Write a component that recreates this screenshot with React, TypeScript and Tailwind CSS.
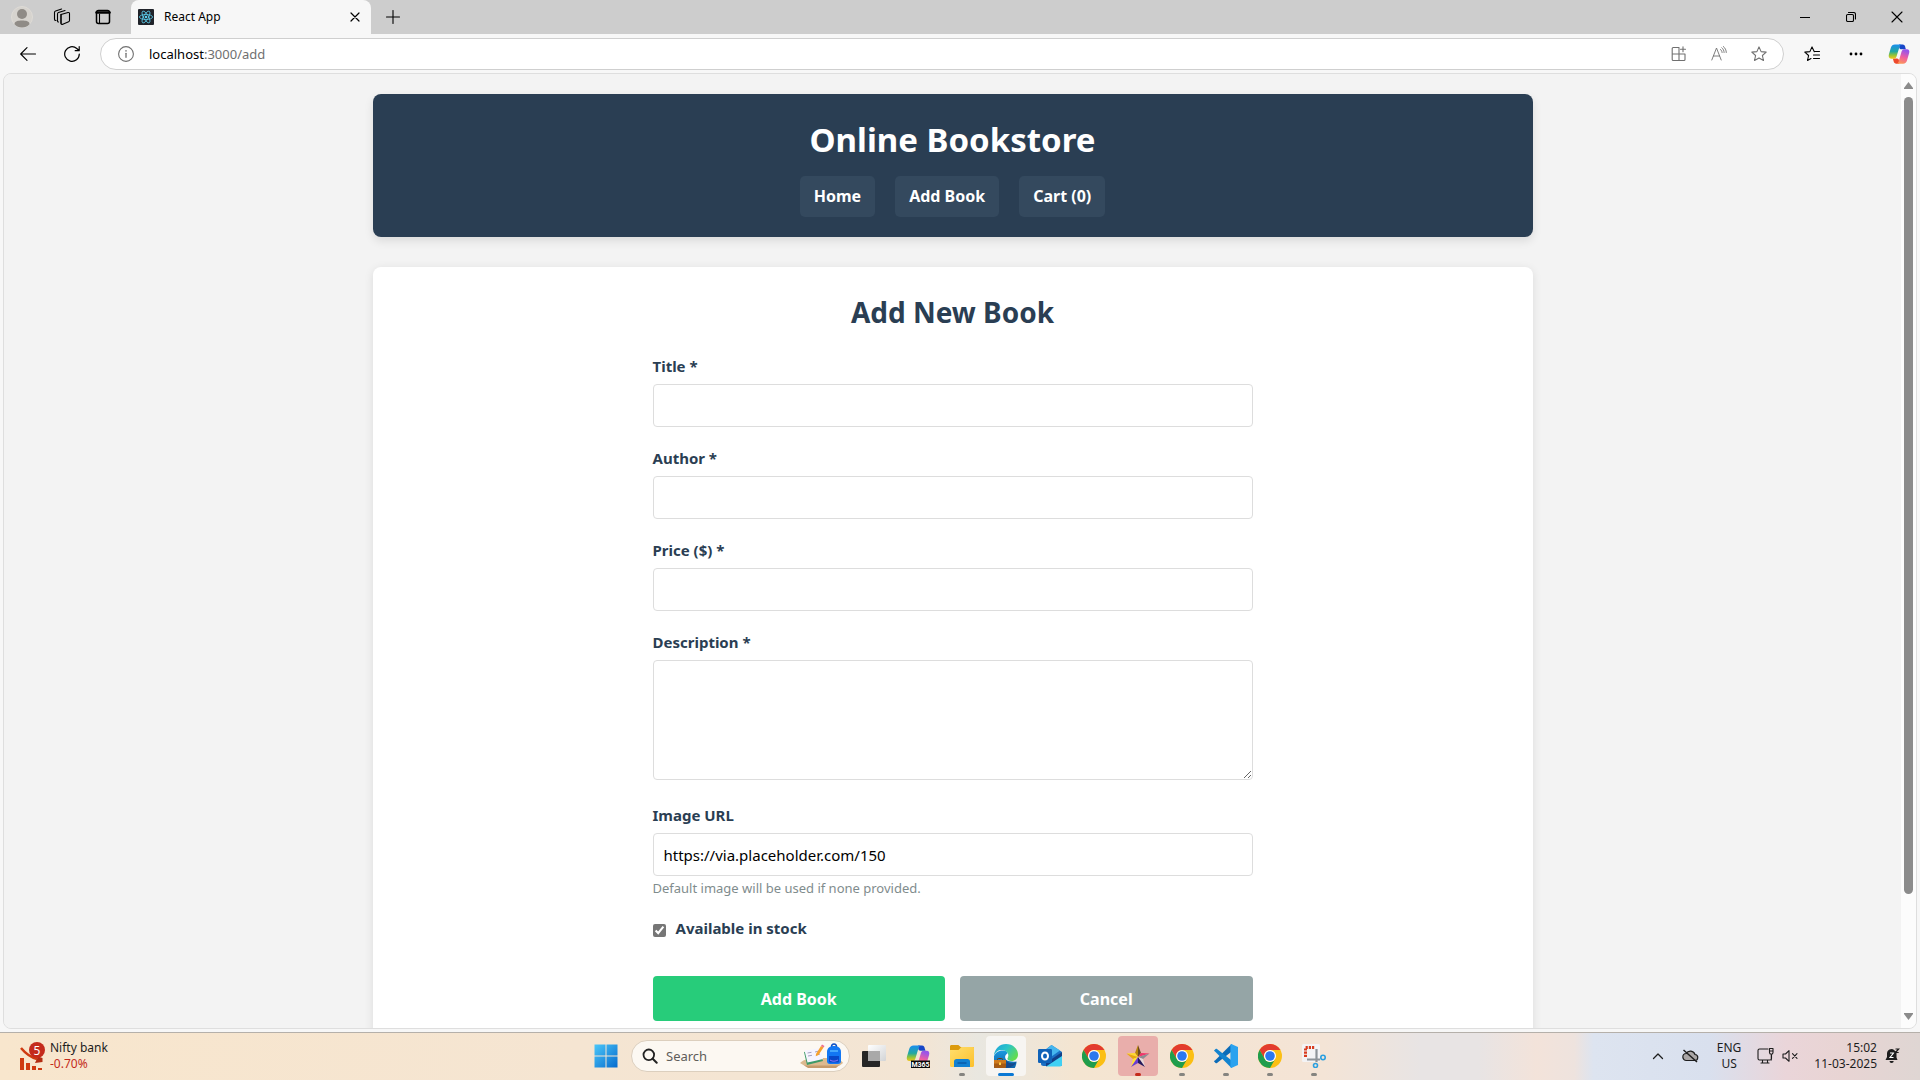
import React from "react";

type IconProps = { children: React.ReactNode; size?: number; box?: string; className?: string };

function Line({ children, size = 16, box = "0 0 16 16", className = "" }: IconProps) {
  return (
    <svg width={size} height={size} viewBox={box} fill="none" stroke="currentColor" strokeWidth="1.1" strokeLinecap="round" strokeLinejoin="round" className={"shrink-0 " + className} aria-hidden="true">
      {children}
    </svg>
  );
}

const STAR = "M8 .9l2.1 4.7 5.1.5-3.8 3.4 1.1 5L8 11.9l-4.5 2.6 1.1-5L.8 6.1l5.1-.5z";

function ReactLogo() {
  return (
    <svg width="16" height="16" viewBox="0 0 16 16" aria-hidden="true">
      <rect width="16" height="16" rx="1" fill="#20232a" />
      <g fill="none" stroke="#5ccfee" strokeWidth=".8">
        <ellipse cx="8" cy="8" rx="6.6" ry="2.5" />
        <ellipse cx="8" cy="8" rx="6.6" ry="2.5" transform="rotate(60 8 8)" />
        <ellipse cx="8" cy="8" rx="6.6" ry="2.5" transform="rotate(120 8 8)" />
      </g>
      <circle cx="8" cy="8" r="1.3" fill="#5ccfee" />
    </svg>
  );
}

function CopilotLogo({ id, size, badge = false }: { id: string; size: number; badge?: boolean }) {
  return (
    <svg width={size} height={size} viewBox="0 0 24 24" aria-hidden="true">
      <defs>
        <linearGradient id={id + "a"} x1="0" y1="0" x2="0" y2="1">
          <stop offset="0" stopColor="#1a8df0" />
          <stop offset=".5" stopColor="#22a8a0" />
          <stop offset=".75" stopColor="#8fc43a" />
          <stop offset="1" stopColor="#f5c51c" />
        </linearGradient>
        <linearGradient id={id + "b"} x1="0.3" y1="0" x2="0" y2="1">
          <stop offset="0" stopColor="#9a55e8" />
          <stop offset=".45" stopColor="#f05fa0" />
          <stop offset="1" stopColor="#ffa04a" />
        </linearGradient>
      </defs>
      <path d="M12 1.5h4.2c1.2 0 1.9.9 2.3 2l1 3.2h-5.2c-1 0-1.7-.5-2-1.6z" fill="#1746c8" />
      <path d="M12.2 22.5H8.6c-1.3 0-2-.9-2.4-2.2L5.3 17h4.6c1.2 0 1.8.8 2 1.7z" fill="#ee4a2d" />
      <path d="M7.6 1.5h7.3c-1.3.3-2 1.4-2.5 3l-3 10c-.5 1.6-1.3 2.6-3 2.6H3.5C1 17.1.3 15 1 12.4l2.2-7.4c.7-2.2 2-3.5 4.4-3.5z" fill={"url(#" + id + "a)"} />
      <path d="M16.400 22.500H9.600c1.200-.3 1.700-1.300 2.100-2.700l3.100-10.400c.5-1.600 1.200-2.700 2.900-2.700h3c2.300 0 3.100 2 2.300 4.600l-2.200 7.500c-.7 2.300-2 3.700-4.400 3.700z" fill={"url(#" + id + "b)"} />
      {badge && (
        <>
          <rect x="5" y="16.500" width="19" height="7.500" fill="#0a0a0a" />
          <text x="14.500" y="23" textAnchor="middle" fontSize="7" fontWeight="700" fill="#fff" fontFamily="Roboto, sans-serif">M365</text>
        </>
      )}
    </svg>
  );
}

function Chrome() {
  return (
    <svg width="24" height="24" viewBox="0 0 24 24" aria-hidden="true">
      <circle cx="12" cy="12" r="12" fill="#fbbf14" />
      <path d="M1.600 6A12 12 0 0 1 22.400 6H12a6 6 0 0 0-5.200 9z" fill="#e33b2e" />
      <path d="M1.600 6A12 12 0 0 0 12 24l5.200-9a6 6 0 0 1-10.400 0z" fill="#1f9d4d" />
      <circle cx="12" cy="12" r="6" fill="#fff" />
      <circle cx="12" cy="12" r="4.800" fill="#2b78ee" />
    </svg>
  );
}

function WindowsLogo() {
  return (
    <svg width="24" height="24" viewBox="0 0 24 24" aria-hidden="true">
      <defs>
        <linearGradient id="win" x1="0" y1="0" x2="24" y2="24" gradientUnits="userSpaceOnUse">
          <stop offset="0" stopColor="#4cc9fa" />
          <stop offset="1" stopColor="#0568cc" />
        </linearGradient>
      </defs>
      <path d="M.5.500h11v11H.5zM12.500.500h11v11h-11zM.5 12.500h11v11H.5zM12.500 12.500h11v11h-11z" fill="url(#win)" />
    </svg>
  );
}

function TaskView() {
  return (
    <svg width="24" height="24" viewBox="0 0 24 24" aria-hidden="true">
      <defs>
        <linearGradient id="tv" x1="0" y1="0" x2="1" y2="1">
          <stop offset="0" stopColor="#ffffff" />
          <stop offset="1" stopColor="#d2d4d6" />
        </linearGradient>
      </defs>
      <rect x="0" y="7" width="18" height="16" rx="1" fill="#262626" />
      <rect x="6" y="1" width="18" height="16" rx="1" fill="url(#tv)" />
      <rect x="6" y="7" width="12" height="10" fill="#a9a9a9" />
    </svg>
  );
}

function Folder() {
  return (
    <svg width="24" height="24" viewBox="0 0 24 24" aria-hidden="true">
      <defs>
        <linearGradient id="fo" x1="0" y1="0" x2="1" y2="1">
          <stop offset="0" stopColor="#ffdf6e" />
          <stop offset="1" stopColor="#fcc02c" />
        </linearGradient>
      </defs>
      <path d="M0 2.500C0 1.700.6 1 1.400 1h7l2.200 2H23c.6 0 1 .5 1 1v6H0z" fill="#dc9a0c" />
      <path d="M0 6h8.500l3-3H23c.6 0 1 .5 1 1v17.500c0 .8-.6 1.500-1.400 1.500H1.400C.6 23 0 22.300 0 21.500z" fill="url(#fo)" />
      <path d="M4 23v-5.500c0-1.400 1-2.500 2.500-2.500h11c1.500 0 2.500 1.100 2.500 2.500V23z" fill="#1180d2" />
      <path d="M7.500 19h9" stroke="#0a5ba8" strokeWidth="1.500" />
    </svg>
  );
}

function Edge() {
  return (
    <svg width="24" height="24" viewBox="0 0 24 24" aria-hidden="true">
      <defs>
        <linearGradient id="eg" x1="0" y1="0" x2="1" y2=".6">
          <stop offset="0" stopColor="#1c9fdc" />
          <stop offset=".5" stopColor="#2bc4c8" />
          <stop offset="1" stopColor="#63dc50" />
        </linearGradient>
        <linearGradient id="eb" x1="0" y1="0" x2="0" y2="1">
          <stop offset="0" stopColor="#1a9ae0" />
          <stop offset="1" stopColor="#0b4f97" />
        </linearGradient>
      </defs>
      <path d="M22.500 17.500A12 12 0 1 1 0 12C2 7 7 6 10 6.500c4 .5 4 4 3 6-1.500 3 1 6 9.500 5z" fill="url(#eb)" />
      <path d="M0 11.500C.4 4.800 5.700 0 12 0c7 0 12 5 12 10.500 0 4-3 6.500-6.500 6.500-2.500 0-4.500-1-4.300-2.200.2-.8 1.100-1.300 1.100-3.300 0-3.500-3.500-5.500-7-5.500C4 6 1.500 8 0 11.500z" fill="url(#eg)" />
      <path d="M12.500 12c-1.500 3 .5 7 5 7.300 2 .1 3.800-.5 5-1.500-2 4-6 6.200-10.500 6.200z" fill="#174a8c" />
      <path d="M13.800 9.500c1 2-.3 3.800-.6 5.300 0 1.500 2 2.300 4 2.300-4 .6-6.500-2-6-4.800.3-1.500 1.500-2.500 2.600-2.800z" fill="#fff" />
      <rect x="3.500" y="14.500" width="5" height="3" rx="1" fill="none" stroke="#6a3a10" />
      <rect x="0" y="16" width="12" height="8" rx="1" fill="#a65a14" />
      <path d="M0 16h12v3.500H0z" fill="#cf7a1c" />
      <rect x="5" y="18.500" width="2" height="2.500" fill="#ffd24a" />
    </svg>
  );
}

function Outlook() {
  return (
    <svg width="24" height="24" viewBox="0 0 24 24" aria-hidden="true">
      <path d="M3 9L13.500 1 24 8v12.500c0 1-.8 1.500-1.500 1.500h-17C4 22 3 21 3 20z" fill="#1a6fc4" />
      <path d="M6 7l7.500-6L22 6.500l-8.500 6z" fill="#45b6ee" />
      <path d="M24 8v12.500c0 1-.8 2-2 2H8z" fill="#3fd0f4" />
      <path d="M24 8L8 19v3.500L24 12z" fill="#123f87" />
      <rect x="0" y="5" width="14" height="14" rx="1.200" fill="#0f62b8" />
      <ellipse cx="7" cy="12" rx="3" ry="3.500" fill="none" stroke="#fff" strokeWidth="2" />
    </svg>
  );
}

function StarApp() {
  return (
    <svg width="24" height="24" viewBox="0 0 24 24" aria-hidden="true">
      <path d="M12 1l-3 8 3 4z" fill="#b9860c" />
      <path d="M12 1l3 8-3 4z" fill="#6a4a20" />
      <path d="M12 13L.5 9.500 9 9z" fill="#ffd92e" />
      <path d="M12 13L.5 9.500 7 15z" fill="#e7a80f" />
      <path d="M12 13l11.500-3.500L15 9z" fill="#f0356a" />
      <path d="M12 13l11.500-3.500L17 15z" fill="#8c8c92" />
      <path d="M12 13l-5 2-2 8z" fill="#ffe234" />
      <path d="M12 13l-7 10 7-4z" fill="#6a3fd0" />
      <path d="M12 13l5 2 2 8z" fill="#e6d8d8" />
      <path d="M12 13l7 10-7-4z" fill="#241a5c" />
    </svg>
  );
}

function VsCode() {
  return (
    <svg width="24" height="24" viewBox="0 0 24 24" aria-hidden="true">
      <path d="M1 16.600L17.500 0 19 6.500 3 19c-.5.400-1 .3-1.400 0L.3 17.700c-.4-.4-.3-.8.700-1.100z" fill="#0b6cb8" />
      <path d="M1 7.400L17.500 24l1.500-6.500L3 5c-.5-.4-1-.3-1.400 0L.3 6.300c-.4.400-.3.800.700 1.100z" fill="#1283cf" />
      <path d="M17.300 0L24 3v18l-6.700 3c-.6-.3-.9-.7-.9-1.200V1.200c0-.5.300-.9.900-1.200z" fill="#2ba2ef" />
    </svg>
  );
}

function SnippingTool() {
  return (
    <svg width="24" height="24" viewBox="0 0 24 24" aria-hidden="true">
      <rect x="0" y="0" width="18" height="18" rx="1.500" fill="#f3f3f5" />
      <path d="M3.500 13V3.500H13" fill="none" stroke="#d83b1e" strokeWidth="3" strokeDasharray="2.200 1" />
      <path d="M14.500 5v13M5 15.500h13" stroke="#8d9399" strokeWidth="2.200" fill="none" />
      <circle cx="21" cy="13.500" r="2.200" fill="none" stroke="#2a9fe0" strokeWidth="1.600" />
      <circle cx="13.500" cy="21.500" r="2" fill="none" stroke="#2a9fe0" strokeWidth="1.600" />
    </svg>
  );
}

function SearchArt() {
  return (
    <svg width="46" height="26" viewBox="0 0 46 26" aria-hidden="true">
      <path d="M1 20c4-4 9-5 22-5s20 2 21 5l-4 3H6z" fill="#dcb98e" />
      <path d="M5 22.500h35l-3 2.500H9z" fill="#c59a6a" />
      <path d="M5 9l15-3 4 12-16 4z" fill="#3e9a68" />
      <path d="M5.500 7.500l8-1 2 11.500-7 1.500zM13.500 6.500l7.500-1.500 3 11-8.500 2z" fill="#f6f4ff" />
      <path d="M8.500 10l4-.7M9 13l4-.7M16 9l4-1M17 12l4-1" stroke="#8e8bb0" strokeWidth=".8" />
      <path d="M17 11l5-8 2.500 1.500-5 7.500-2.800 1.200z" fill="#f7a12c" />
      <path d="M22 3l1-1.500 2.500 1.500-1 1.500z" fill="#ef6b8c" />
      <path d="M32.500 4c0-4 5-4 5 0" fill="none" stroke="#0d4fc4" strokeWidth="1.500" />
      <path d="M28 9c0-4 3-6 7-6s7 2 7 6v9c0 2-1 3-3 3h-8c-2 0-3-1-3-3z" fill="#1277f3" />
      <path d="M30 13h10v5c0 1-.5 1.500-1.500 1.500h-7c-1 0-1.500-.5-1.500-1.500z" fill="#0848c8" />
      <path d="M31 8h8" stroke="#54b7ff" strokeWidth="1.500" />
      <path d="M31 17c3 2 6 1 8 0" stroke="#9b7bff" fill="none" />
    </svg>
  );
}

type TaskProps = { label: string; children: React.ReactNode; tile?: string; mark?: string };

function Task({ label, children, tile = "", mark = "" }: TaskProps) {
  return (
    <button aria-label={label} className="relative flex h-10 w-11 items-center justify-center">
      <span className={"flex h-10 w-10 items-center justify-center rounded " + tile}>{children}</span>
      {mark && <span className={"absolute bottom-0 left-1/2 h-[3px] -translate-x-1/2 rounded-full " + mark} />}
    </button>
  );
}

const OPEN_MARK = "w-1.5 bg-[#858480]";

function TitleBar() {
  return (
    <div className="flex h-[34px] shrink-0 bg-[#cdcdcd] text-black">
      <div className="flex items-center gap-5 pr-5 pl-[11px]">
        <button aria-label="Profile">
          <svg width="22" height="22" viewBox="0 0 22 22" aria-hidden="true">
            <circle cx="11" cy="11" r="10.500" fill="#d6d3ce" stroke="#dedbd6" />
            <circle cx="11" cy="8" r="5" fill="#8f8b86" />
            <path d="M3.500 18.300C3.500 15 7 14.500 11 14.500s7.500.5 7.500 3.800A10.500 10.500 0 0 1 11 21.500a10.500 10.500 0 0 1-7.500-3.200z" fill="#8f8b86" />
          </svg>
        </button>
        <button aria-label="Workspaces">
          <Line size={18} box="0 0 18 18">
            <path d="M8 6.500l7-2c.8-.2 1.500.2 1.500 1v7c0 .6-.3 1-.9 1.200l-5.800 2.500c-1 .4-1.800 0-1.800-1zM5.500 14C5 14 4.500 13.500 4.500 13V6c0-.8.4-1.300 1-1.500l6.500-2M3 12.500c-.8 0-1.500-.5-1.500-1.300V4.500C1.500 3.700 2 3.200 2.600 3l6-2" />
            <path d="M8 6.500v8.700" />
          </Line>
        </button>
        <button aria-label="Tab actions" className="ml-1">
          <Line>
            <rect x="1.500" y="1.500" width="13" height="13" rx="2" strokeWidth="1.500" />
            <path d="M1.500 3.500h13" strokeWidth="2.500" />
            <path d="M4.500 5v9" />
          </Line>
        </button>
      </div>
      <div className="flex w-60 items-center rounded-t-lg bg-[#f7f7f7] pr-2 pl-[7px]">
        <ReactLogo />
        <span className="ml-2.5 flex-1 text-[12px] leading-4">React App</span>
        <button aria-label="Close tab" className="flex h-4 w-4 items-center justify-center">
          <Line size={10} box="0 0 10 10"><path d="M1 1l8 8M9 1L1 9" strokeWidth="1.200" /></Line>
        </button>
      </div>
      <button aria-label="New tab" className="flex w-11 items-center justify-center">
        <Line size={14} box="0 0 14 14"><path d="M7 .5v13M.5 7h13" /></Line>
      </button>
      <div className="ml-auto flex">
        <button aria-label="Minimize" className="flex w-[46px] items-center justify-center">
          <Line size={10} box="0 0 10 10"><path d="M0 5.500h10" strokeWidth="1" /></Line>
        </button>
        <button aria-label="Restore" className="flex w-[46px] items-center justify-center">
          <Line size={10} box="0 0 10 10">
            <rect x=".5" y="2.500" width="7" height="7" rx="1.200" />
            <path d="M2.500.5H7.500c1.200 0 2 .8 2 2V7" />
          </Line>
        </button>
        <button aria-label="Close" className="flex w-[46px] items-center justify-center">
          <Line size={12} box="0 0 12 12"><path d="M1 1l10 10M11 1L1 11" /></Line>
        </button>
      </div>
    </div>
  );
}

function Toolbar() {
  return (
    <div className="flex h-[39px] shrink-0 items-center bg-[#f7f7f7] text-black">
      <button aria-label="Back" className="ml-5">
        <Line><path d="M15.500 8H.7M7 1.700L.7 8 7 14.300" /></Line>
      </button>
      <button aria-label="Refresh" className="ml-7">
        <Line><path d="M15.300 8A7.300 7.300 0 1 1 12.800 2.500L15 4.500M15.200.7v4h-4" strokeWidth="1.200" /></Line>
      </button>
      <div className="ml-5 flex h-8 flex-1 items-center rounded-full border border-[#cfcfcf] bg-white px-4 text-[#707070]">
        <button aria-label="Site information" className="ml-px">
          <Line><circle cx="8" cy="8" r="7.400" /><path d="M8 7.300v4" strokeWidth="1.300" /><path d="M8 4.800v.1" strokeWidth="1.500" /></Line>
        </button>
        <div role="textbox" aria-label="Address" className="ml-[15px] flex-1 text-[13px] leading-5">
          <span className="text-black">localhost</span>:3000/add
        </div>
        <div className="flex items-center gap-6">
          <button aria-label="Apps"><Line><path d="M8 8V1.500H2.200c-.6 0-1 .4-1 1v11c0 .6.400 1 1 1H13c.6 0 1-.4 1-1V8H1.200M8 8v6.500M12 .800v5M9.500 3.300h5" /></Line></button>
          <button aria-label="Read aloud"><Line><path d="M.8 14L5.500 2l4.700 12M2.400 10h6.200M9.500 3.500c1 .8 1.500 1.700 1.600 3M10.800 1.800c1.500 1.200 2.200 2.700 2.300 4.700M12.300.500c1.900 1.500 2.900 3.500 3 6" strokeWidth=".9" /></Line></button>
          <button aria-label="Add to favorites"><Line><path d={STAR} /></Line></button>
        </div>
      </div>
      <div className="ml-5 flex items-center gap-7 pr-2.5">
        <button aria-label="Favorites"><Line><path d="M10.300 5.700L8 .9 5.900 5.600.8 6.100l3.800 3.400-1.100 5L7 12.500M10.500 5.500h5M9.500 9h6M9.500 12.500h6" /></Line></button>
        <button aria-label="Settings and more"><Line><g fill="currentColor" stroke="none"><circle cx="3" cy="8" r="1.400" /><circle cx="8" cy="8" r="1.400" /><circle cx="13" cy="8" r="1.400" /></g></Line></button>
        <button aria-label="Copilot" className="-ml-1"><CopilotLogo id="tool" size={22} /></button>
      </div>
    </div>
  );
}

const inputClass = "mt-[7px] h-[43px] w-full rounded border border-[#dddddd] bg-white px-2.5 text-[15px] text-black";
const labelClass = "block text-[15px] leading-[22px] font-bold text-[#2a3e53]";

function Field({ id, label, value = "" }: { id: string; label: string; value?: string }) {
  return (
    <div>
      <label htmlFor={id} className={labelClass}>{label}</label>
      <input id={id} type="text" defaultValue={value} className={inputClass} />
    </div>
  );
}

function NavLink({ children }: { children: React.ReactNode }) {
  return (
    <a href="#" className="rounded-[5px] bg-[#34495e] px-3.5 py-2 text-[16px] leading-[25px] font-bold text-white">
      {children}
    </a>
  );
}

function Page() {
  return (
    <main className="min-w-0 flex-1 overflow-hidden bg-[#f3f3f3]">
      <div className="mx-auto max-w-[1200px] p-5">
        <header className="rounded-lg bg-[#2a3e53] p-5 text-center shadow-[0_4px_10px_rgba(0,0,0,0.1)]">
          <h1 className="text-[33px] leading-[52px] font-bold text-white">Online Bookstore</h1>
          <nav className="mt-2.5 flex justify-center gap-5">
            <NavLink>Home</NavLink>
            <NavLink>Add Book</NavLink>
            <NavLink>Cart (0)</NavLink>
          </nav>
        </header>
        <section className="mt-[30px] rounded-lg bg-white px-[30px] pt-7 pb-[30px] shadow-[0_2px_10px_rgba(0,0,0,0.1)]">
          <h2 className="text-center text-[28px] leading-[34px] font-bold text-[#2a3e53]">Add New Book</h2>
          <form className="mx-auto mt-[26px] flex max-w-[600px] flex-col gap-5">
            <Field id="title" label="Title *" />
            <Field id="author" label="Author *" />
            <Field id="price" label="Price ($) *" />
            <div>
              <label htmlFor="description" className={labelClass}>Description *</label>
              <textarea id="description" className="mt-[7px] block h-[120px] w-full resize-y rounded border border-[#dddddd] bg-white p-2.5" />
            </div>
            <div className="mt-1">
              <Field id="image" label="Image URL" value="https://via.placeholder.com/150" />
              <small className="mt-px block text-[13px] leading-[22px] text-[#7f8c8d]">Default image will be used if none provided.</small>
            </div>
            <div className="-mt-1 flex h-[26px] items-center gap-2.5">
              <input id="stock" type="checkbox" defaultChecked className="mt-1 h-[13px] w-[13px] accent-[#767676]" />
              <label htmlFor="stock" className={labelClass}>Available in stock</label>
            </div>
            <div className="mt-[15px] flex gap-[15px]">
              <button type="button" className="h-[45px] flex-1 rounded bg-[#27cc7a] text-[16px] font-bold text-white">Add Book</button>
              <button type="button" className="h-[45px] flex-1 rounded bg-[#95a5a6] text-[16px] font-bold text-white">Cancel</button>
            </div>
          </form>
        </section>
      </div>
    </main>
  );
}

function Scrollbar() {
  return (
    <div className="flex w-[15px] shrink-0 flex-col items-center bg-[#fcfcfc] py-2" aria-hidden="true">
      <svg width="9" height="7" viewBox="0 0 9 7"><path d="M4.500 0L9 6v1H0V6z" fill="#8b8b8b" /></svg>
      <div className="mt-2 flex min-h-0 w-[9px] flex-1 flex-col">
        <div className="h-[87%] rounded-full bg-[#8b8b8b]" />
      </div>
      <svg width="9" height="7" viewBox="0 0 9 7"><path d="M4.500 7L0 1V0h9v1z" fill="#8b8b8b" /></svg>
    </div>
  );
}

function Taskbar() {
  return (
    <footer className="grid h-12 shrink-0 grid-cols-[1fr_auto_1fr] items-center border-t border-[#b5b0aa] bg-[linear-gradient(90deg,#f8e6cd_0%,#f5e5d2_30%,#f3e5d4_48%,#e9e7e0_51%,#f4e5d1_56%,#f4e4d6_69%,#e8e4e4_74%,#e8e4e4_77%,#f3e3da_80%,#eee3de_82%,#dde4f0_83%,#d9e0ee_89%,#ead5d9_93%,#e8d4d3_96%,#dfd6d3_100%)] pb-0.5 text-[#1d1d1d]">
      <button className="ml-[19px] flex items-center gap-[5px] justify-self-start text-left">
        <svg width="26" height="28" viewBox="0 0 26 28" aria-hidden="true">
          <path d="M1 16h4v12H1zM7 21h4v7H7zM13 24h4v4h-4zM19 26h4v2h-4z" fill="#cf3a10" />
          <path d="M2 6c5 6 10 9.500 16 11" fill="none" stroke="#cf3a10" strokeWidth="2.500" />
          <path d="M16 21l3-6.500 4.500 1.500v4z" fill="#b32c12" />
          <circle cx="18" cy="8" r="8" fill="#c42b1c" />
          <text x="18" y="12.500" textAnchor="middle" fontSize="12" fill="#fff">5</text>
        </svg>
        <span className="text-[12px] leading-4">
          <span className="block">Nifty bank</span>
          <span className="block text-[#c42b1c]">-0.70%</span>
        </span>
      </button>
      <div className="flex items-center">
        <Task label="Start"><WindowsLogo /></Task>
        <div className="mr-0.5 ml-[3px] flex h-8 w-[219px] items-center rounded-full border border-[#dccfbe] bg-[#fcf8f2] pr-1 pl-2.5">
          <Line size={16} className="text-[#222]"><circle cx="6.800" cy="6.800" r="5.300" strokeWidth="1.800" /><path d="M10.700 10.700l4 4" strokeWidth="2" /></Line>
          <input type="text" aria-label="Search" placeholder="Search" className="ml-2 w-20 min-w-0 flex-1 bg-transparent text-[13px] leading-5 placeholder:text-[#5f5d5a]" />
          <SearchArt />
        </div>
        <Task label="Task view"><TaskView /></Task>
        <Task label="Microsoft 365 Copilot"><CopilotLogo id="task" size={24} badge /></Task>
        <Task label="File Explorer" mark={OPEN_MARK}><Folder /></Task>
        <Task label="Edge" tile="bg-[#f7f5f2]" mark="w-4 bg-[#0a78d4]"><Edge /></Task>
        <Task label="Outlook"><Outlook /></Task>
        <Task label="Chrome"><Chrome /></Task>
        <Task label="Star" tile="bg-[#e9aeab]" mark="w-1.5 bg-[#c42b1c]"><StarApp /></Task>
        <Task label="Chrome, second profile" mark={OPEN_MARK}><Chrome /></Task>
        <Task label="Visual Studio Code" mark={OPEN_MARK}><VsCode /></Task>
        <Task label="Chrome, third profile" mark={OPEN_MARK}><Chrome /></Task>
        <Task label="Snipping Tool" mark={OPEN_MARK}><SnippingTool /></Task>
      </div>
      <div className="flex items-center justify-self-end pr-5 text-[12px] leading-4">
        <button aria-label="Hidden icons" className="mr-[18px]"><Line size={12} box="0 0 12 12"><path d="M1.500 8.500L6 4l4.500 4.500" strokeWidth="1.300" /></Line></button>
        <button aria-label="OneDrive" className="mr-[18px]">
          <svg width="17" height="16" viewBox="0 0 17 16" fill="none" stroke="#1d1d1d" strokeWidth="1.200" aria-hidden="true">
            <path d="M4.500 12.500a3.500 3.500 0 0 1-.3-7A4.800 4.800 0 0 1 13 6.500a3 3 0 0 1-.5 6z" fill="#aaa6a6" />
            <path d="M1.500 2l13.500 12" strokeWidth="1.500" />
          </svg>
        </button>
        <button className="mr-4 text-center"><span className="block">ENG</span><span className="block">US</span></button>
        <button aria-label="Network and volume" className="flex items-center gap-2">
          <Line size={17} box="0 0 17 17"><path d="M11 2H2.500C1.700 2 1 2.700 1 3.500v8c0 .8.700 1.500 1.500 1.500H13c.8 0 1.500-.7 1.500-1.500V8M5.500 13v3M10.500 13v3M4 16h8M12.500 1.500h3.500v4c0 1-.7 1.700-1.700 1.700s-1.800-.7-1.800-1.700zM12.500 4H16M14.300 7.200V13" /></Line>
          <Line><path d="M1 6h2.500L7 2.700v10.600L3.500 10H1zM10.500 5.700l4.500 4.600M15 5.700l-4.500 4.600" /></Line>
        </button>
        <button className="ml-4 text-right"><span className="block">15:02</span><span className="block">11-03-2025</span></button>
        <button aria-label="Notifications" className="ml-2">
          <svg width="15" height="16" viewBox="0 0 15 16" aria-hidden="true">
            <path d="M6.500 1C3.500 1 2 3.300 2 5.500V9L.5 12h12L11.500 9.500V4L8 1.200zM4.500 13h4.200a2.100 2.100 0 0 1-4.200 0z" fill="#1d1d1d" />
            <path d="M5 5h3.500L5 9.500h3.500" fill="none" stroke="#fff" strokeWidth="1.100" />
            <path d="M10.500 1h3.200l-3.200 3.500h3.200" fill="none" stroke="#1d1d1d" strokeWidth="1.200" />
          </svg>
        </button>
      </div>
    </footer>
  );
}

export default function App() {
  return (
    <div className="flex h-screen flex-col overflow-hidden bg-[#f7f7f7] font-['Noto_Sans',sans-serif]">
      <TitleBar />
      <Toolbar />
      <div className="mx-[3px] mb-[3px] flex min-h-0 flex-1 overflow-hidden rounded-lg border border-[#dedede] bg-[#f3f3f3]">
        <Page />
        <Scrollbar />
      </div>
      <Taskbar />
    </div>
  );
}
